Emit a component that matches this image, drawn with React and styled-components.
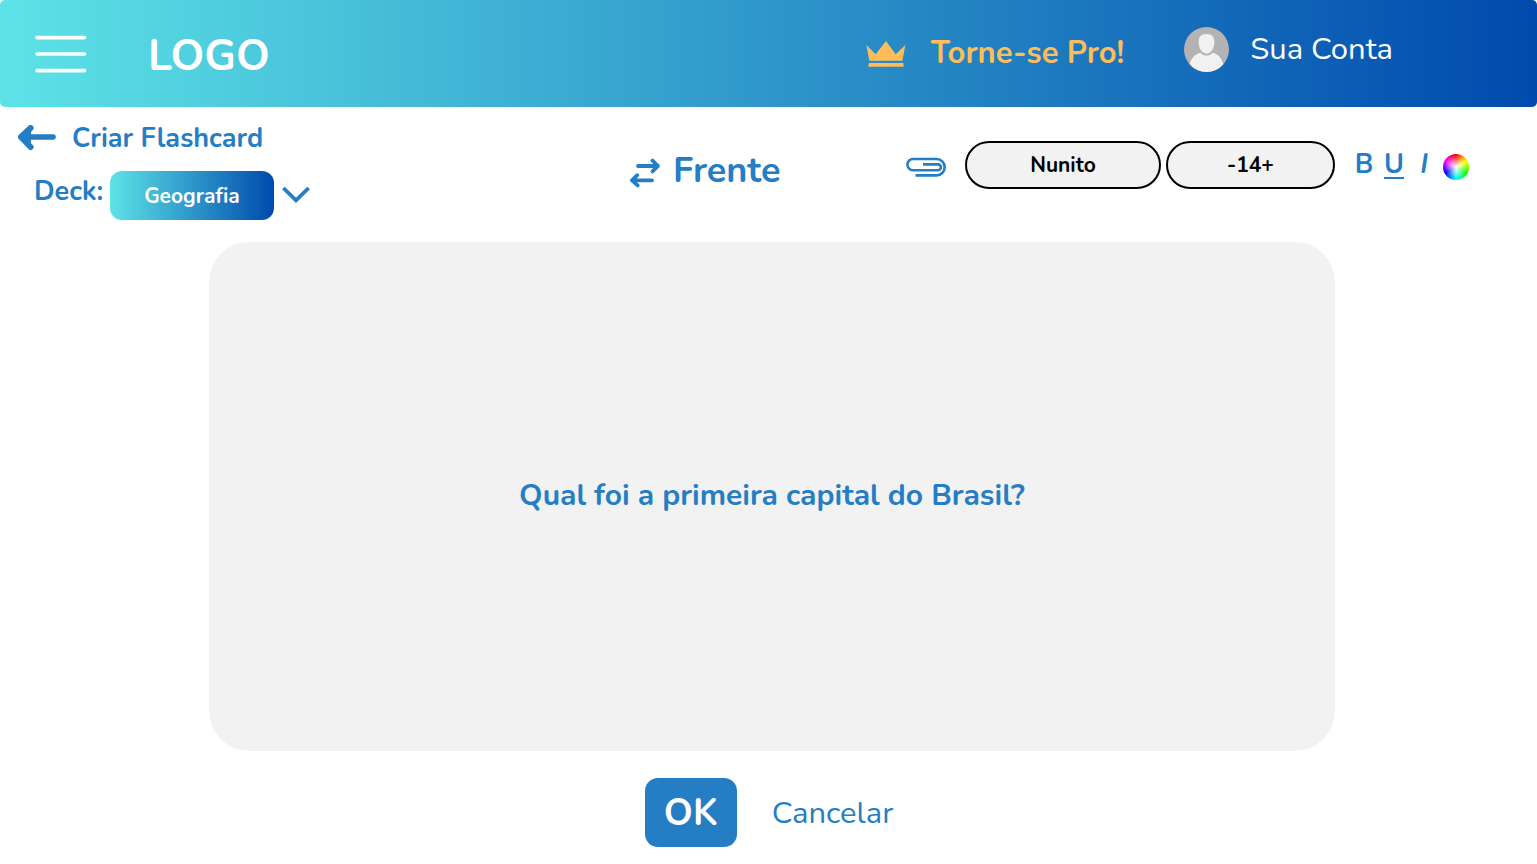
import React from "react";
import styled, { createGlobalStyle, ThemeProvider } from "styled-components";

const theme = {
  blue: "#257ec3",
  gold: "#ffbd59",
  panel: "#f2f2f2",
  gradient: "linear-gradient(90deg, #5de3e7 0%, #004aad 100%)",
  font: 'Nunito, Lato, "Open Sans", sans-serif',
};

const GlobalStyle = createGlobalStyle`
  *, *::before, *::after { box-sizing: border-box; }
  body {
    margin: 0;
    background: #fff;
    color: ${theme.blue};
    font-family: ${theme.font};
    font-variant-ligatures: none;
  }
  button, input, select { font-family: inherit; font-variant-ligatures: inherit; }
`;

const Page = styled.div`
  display: flex;
  flex-direction: column;
  min-height: 100vh;
`;

const Header = styled.header`
  display: flex;
  align-items: center;
  height: 107px;
  padding: 0 144px 0 35px;
  border-radius: 5px;
  background: ${(p) => p.theme.gradient};
  color: #fff;
`;

const PlainButton = styled.button`
  display: inline-flex;
  align-items: center;
  justify-content: center;
  padding: 0;
  border: 0;
  background: none;
  color: inherit;
  cursor: pointer;
`;

const Logo = styled.a`
  margin-left: 61px;
  padding-top: 4px;
  color: inherit;
  font-size: 43px;
  font-weight: 700;
  line-height: 52px;
  text-decoration: none;
`;

const HeaderLinks = styled.nav`
  display: flex;
  align-items: center;
  gap: 60px;
  margin-left: auto;
`;

const HeaderLink = styled.a`
  display: flex;
  align-items: center;
  gap: ${(p) => (p.$pro ? 25 : 21)}px;
  padding-bottom: ${(p) => (p.$pro ? 0 : 8)}px;
  color: ${(p) => (p.$pro ? p.theme.gold : "#fff")};
  font-size: 31px;
  font-weight: ${(p) => (p.$pro ? 700 : 400)};
  line-height: 40px;
  text-decoration: none;
  white-space: nowrap;
`;

const LinkText = styled.span`
  padding-bottom: 2px;
`;

const Toolbar = styled.div`
  display: grid;
  grid-template-columns: 8fr auto 9fr;
  padding: 14px 68px 22px 17px;
`;

const ToolbarStart = styled.div`
  display: flex;
  flex-direction: column;
  gap: 14px;
`;

const BackLink = styled.a`
  display: flex;
  align-items: center;
  gap: 15px;
  color: inherit;
  font-size: 27px;
  font-weight: 700;
  line-height: 36px;
  text-decoration: none;
`;

const DeckRow = styled.div`
  display: flex;
  align-items: center;
  padding-left: 17px;
`;

const DeckLabel = styled.label`
  width: 76px;
  padding-bottom: 8px;
  font-size: 27px;
  font-weight: 700;
  line-height: 36px;
`;

const DeckSelect = styled.select`
  appearance: none;
  width: 164px;
  height: 49px;
  margin-right: 8px;
  padding: 0;
  border: 0;
  border-radius: 12px;
  background: ${(p) => p.theme.gradient};
  color: #fff;
  font-size: 21px;
  font-weight: 700;
  text-align: center;
  text-align-last: center;
`;

const SideSwitch = styled(PlainButton)`
  align-self: center;
  gap: 12px;
  font-size: 36px;
  font-weight: 700;
  line-height: 48px;
`;

const Tools = styled.div`
  display: flex;
  align-items: center;
  justify-content: flex-end;
  align-self: start;
  padding-top: 20px;
`;

const pill = `
  height: 48px;
  border: 2px solid #000;
  border-radius: 24px;
  background: ${theme.panel};
  color: #000;
  font-size: 21px;
  font-weight: 700;
`;

const FontSelect = styled.select`
  ${pill}
  appearance: none;
  width: 196px;
  margin: 0 5px 0 19px;
  padding: 0;
  text-align: center;
  text-align-last: center;
`;

const SizeStepper = styled.div`
  ${pill}
  display: flex;
  align-items: center;
  justify-content: center;
  width: 169px;
  margin-right: 19px;
`;

const StepButton = styled(PlainButton)`
  font-size: 21px;
  font-weight: 700;
`;

const FormatButton = styled(PlainButton)`
  width: 20px;
  height: 28px;
  margin-right: ${(p) => p.$gap}px;
  padding-top: 2px;
  border-bottom: 2px solid ${(p) => (p.$underlined ? "currentColor" : "transparent")};
  font-size: 27px;
  font-style: ${(p) => (p.$italic ? "italic" : "normal")};
  font-weight: 700;
  line-height: 28px;
`;

const ColorWheel = styled(PlainButton)`
  width: 26px;
  height: 26px;
  margin-top: 4px;
  border-radius: 50%;
  background:
    radial-gradient(circle closest-side, #fff 0%, rgba(255, 255, 255, 0) 90%),
    conic-gradient(#f00, #ff0, #0f0, #0ff, #00f, #f0f, #f00);
`;

const AttachButton = styled(PlainButton)`
  padding-top: 4px;
`;

const Card = styled.main`
  display: flex;
  align-items: center;
  min-height: 509px;
  margin: 0 202px 0 209px;
  border-radius: 40px;
  background: ${(p) => p.theme.panel};
`;

const Question = styled.input`
  width: 100%;
  padding: 0 40px 2px;
  border: 0;
  background: none;
  color: ${(p) => p.theme.blue};
  font-size: 30px;
  font-weight: 700;
  line-height: 40px;
  text-align: center;
`;

const Actions = styled.footer`
  display: flex;
  align-items: center;
  justify-content: center;
  gap: 35px;
  padding: 27px 0 17px 1px;
`;

const OkButton = styled(PlainButton)`
  width: 92px;
  height: 69px;
  border-radius: 13px;
  background: ${(p) => p.theme.blue};
  color: #fff;
  font-size: 37px;
  font-weight: 700;
`;

const CancelButton = styled(PlainButton)`
  font-size: 31px;
  line-height: 40px;
`;

const MenuIcon = () => (
  <svg width="52" height="38" viewBox="0 0 52 38" stroke="#fff" strokeWidth="3.6" strokeLinecap="round" aria-hidden="true">
    <path d="M2 2.6H49.5M2 19H49.5M2 35.6H49.5" />
  </svg>
);

const CrownIcon = () => (
  <svg width="40" height="26" viewBox="0 0 120 78" fill="currentColor" aria-hidden="true">
    <path d="M1 12 29 40 60 0 89 40 118 12 109 59H10Z" />
    <path d="M9 66H112L113 77H6Z" />
  </svg>
);

const AvatarIcon = () => (
  <svg width="45" height="45" viewBox="0 0 135 135" aria-hidden="true">
    <circle cx="67.5" cy="67.5" r="67.5" fill="#b3b3b3" />
    <path d="M67.5 21C84 21 91 29 91 46C91 64 81 80 67.5 80S44 64 44 46C44 29 51 21 67.5 21Z" fill="#f1f1f1" />
    <path d="M17 112C21 92 36 79 49 77Q67.5 96 86 77C99 79 114 92 118 112Q98 135 67.5 135T17 112Z" fill="#f1f1f1" />
  </svg>
);

const BackIcon = () => (
  <svg width="40" height="28" viewBox="0 0 40 28" fill="none" stroke="currentColor" strokeLinecap="round" strokeLinejoin="round" aria-hidden="true">
    <path d="M5 12H36" strokeWidth="5.6" />
    <path d="M13.6 3 4 12 13.6 22" strokeWidth="6" />
    <path d="M5 12 14 6V18Z" fill="currentColor" stroke="none" />
  </svg>
);

const ChevronIcon = () => (
  <svg width="28" height="20" viewBox="0 0 28 20" fill="none" stroke="currentColor" strokeWidth="3.8" aria-hidden="true">
    <path d="M1.4 2 14 14.4 26.6 2" />
  </svg>
);

const SwapIcon = () => (
  <svg width="32" height="34" viewBox="0 0 32 34" fill="none" stroke="currentColor" strokeWidth="3.8" strokeLinecap="round" strokeLinejoin="round" aria-hidden="true">
    <path d="M9 12H29M23.5 6.6 29 12 23.5 17.4" />
    <path d="M23 26.4H3M8.2 21.2 3 26.4 8.6 31.4" />
  </svg>
);

const ClipIcon = () => (
  <svg width="40" height="20" viewBox="0 0 40 20" fill="none" stroke="currentColor" strokeWidth="2.6" aria-hidden="true">
    <path d="M17 7.4H32a2.9 2.9 0 0 1 0 5.8H7a5.6 5.6 0 0 1 0-11.2H30.5a8.2 8.2 0 0 1 0 16.4H9.5" />
  </svg>
);

export default function App() {
  return (
    <ThemeProvider theme={theme}>
      <GlobalStyle />
      <Page>
        <Header>
          <PlainButton type="button" aria-label="Menu">
            <MenuIcon />
          </PlainButton>
          <Logo href="#inicio">LOGO</Logo>
          <HeaderLinks>
            <HeaderLink href="#pro" $pro>
              <CrownIcon />
              <LinkText>Torne-se Pro!</LinkText>
            </HeaderLink>
            <HeaderLink href="#conta">
              <AvatarIcon />
              <LinkText>Sua Conta</LinkText>
            </HeaderLink>
          </HeaderLinks>
        </Header>

        <Toolbar>
          <ToolbarStart>
            <BackLink href="#voltar">
              <BackIcon />
              Criar Flashcard
            </BackLink>
            <DeckRow>
              <DeckLabel htmlFor="deck">Deck:</DeckLabel>
              <DeckSelect id="deck" defaultValue="Geografia">
                <option>Geografia</option>
              </DeckSelect>
              <ChevronIcon />
            </DeckRow>
          </ToolbarStart>

          <SideSwitch type="button">
            <SwapIcon />
            Frente
          </SideSwitch>

          <Tools>
            <AttachButton type="button" aria-label="Anexar">
              <ClipIcon />
            </AttachButton>
            <FontSelect aria-label="Fonte" defaultValue="Nunito">
              <option>Nunito</option>
            </FontSelect>
            <SizeStepper role="group" aria-label="Tamanho">
              <StepButton type="button">-</StepButton>
              <output>14</output>
              <StepButton type="button">+</StepButton>
            </SizeStepper>
            <FormatButton type="button" $gap={10}>B</FormatButton>
            <FormatButton type="button" $underlined $gap={10}>U</FormatButton>
            <FormatButton type="button" $italic $gap={9}>I</FormatButton>
            <ColorWheel type="button" aria-label="Cor" />
          </Tools>
        </Toolbar>

        <Card>
          <Question aria-label="Frente do flashcard" defaultValue="Qual foi a primeira capital do Brasil?" />
        </Card>

        <Actions>
          <OkButton type="button">OK</OkButton>
          <CancelButton type="button">Cancelar</CancelButton>
        </Actions>
      </Page>
    </ThemeProvider>
  );
}
